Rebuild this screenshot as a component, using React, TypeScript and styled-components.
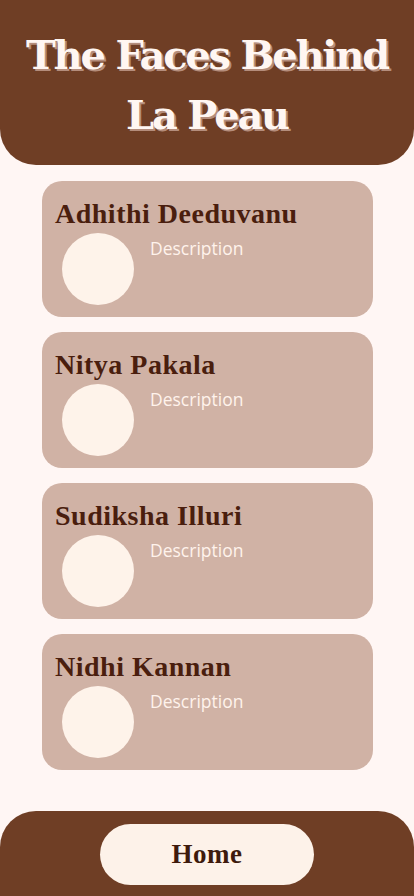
import React from "react";
import styled, { createGlobalStyle } from "styled-components";

const Global = createGlobalStyle`
  html, body { margin: 0; padding: 0; background: #fff6f4; }
  * { box-sizing: border-box; }
`;

const Page = styled.div`
  width: 414px;
  min-height: 896px;
  background: #fff6f4;
  display: flex;
  flex-direction: column;
`;

const Header = styled.header`
  height: 165px;
  background: #6f3e25;
  border-radius: 0 0 36px 36px;
  display: flex;
  align-items: center;
  justify-content: center;
  padding-top: 4px;
`;

const Title = styled.h1`
  margin: 0;
  font-family: "DejaVu Serif", "Liberation Serif", serif;
  font-weight: 700;
  font-size: 40px;
  line-height: 60px;
  letter-spacing: -2.2px;
  text-align: center;
  color: #fff6f2;
  text-shadow: 2px 2px 0 #b48d7c;
`;

const List = styled.main`
  display: flex;
  flex-direction: column;
  gap: 15px;
  padding: 16px 41px 0 42px;
`;

const Card = styled.section`
  height: 136px;
  background: #d0b2a5;
  border-radius: 20px;
  padding: 17px 13px 0 13px;
`;

const Name = styled.h2`
  margin: 0;
  font-family: "Liberation Serif", "DejaVu Serif", serif;
  font-weight: 700;
  font-size: 28px;
  line-height: 32px;
  letter-spacing: 0.5px;
  color: #4a1e0e;
`;

const Body = styled.div`
  display: flex;
  gap: 16px;
  padding-left: 7px;
  margin-top: 3px;
`;

const Avatar = styled.div`
  width: 72px;
  height: 72px;
  border-radius: 50%;
  background: #fef3ea;
  flex: none;
`;

const Desc = styled.p`
  margin: 4px 0 0;
  font-family: "Open Sans", "Noto Sans", sans-serif;
  font-weight: 400;
  font-size: 17.5px;
  line-height: 22px;
  color: #fff3ec;
`;

const Footer = styled.footer`
  margin-top: auto;
  height: 85px;
  background: #6f3e25;
  border-radius: 36px 36px 0 0;
  display: flex;
  justify-content: center;
  padding-top: 13px;
`;

const HomeButton = styled.button`
  width: 214px;
  height: 61px;
  border: none;
  border-radius: 31px;
  background: #fdf2e9;
  font-family: "Liberation Serif", "DejaVu Serif", serif;
  font-weight: 700;
  font-size: 27px;
  letter-spacing: 0.5px;
  color: #3e1a0c;
  cursor: pointer;
`;

const people = ["Adhithi Deeduvanu", "Nitya Pakala", "Sudiksha Illuri", "Nidhi Kannan"];

export default function App() {
  return (
    <>
      <Global />
      <Page>
        <Header>
          <Title>
            The Faces Behind
            <br />
            La Peau
          </Title>
        </Header>
        <List>
          {people.map((p) => (
            <Card key={p}>
              <Name>{p}</Name>
              <Body>
                <Avatar />
                <Desc>Description</Desc>
              </Body>
            </Card>
          ))}
        </List>
        <Footer>
          <HomeButton>Home</HomeButton>
        </Footer>
      </Page>
    </>
  );
}
